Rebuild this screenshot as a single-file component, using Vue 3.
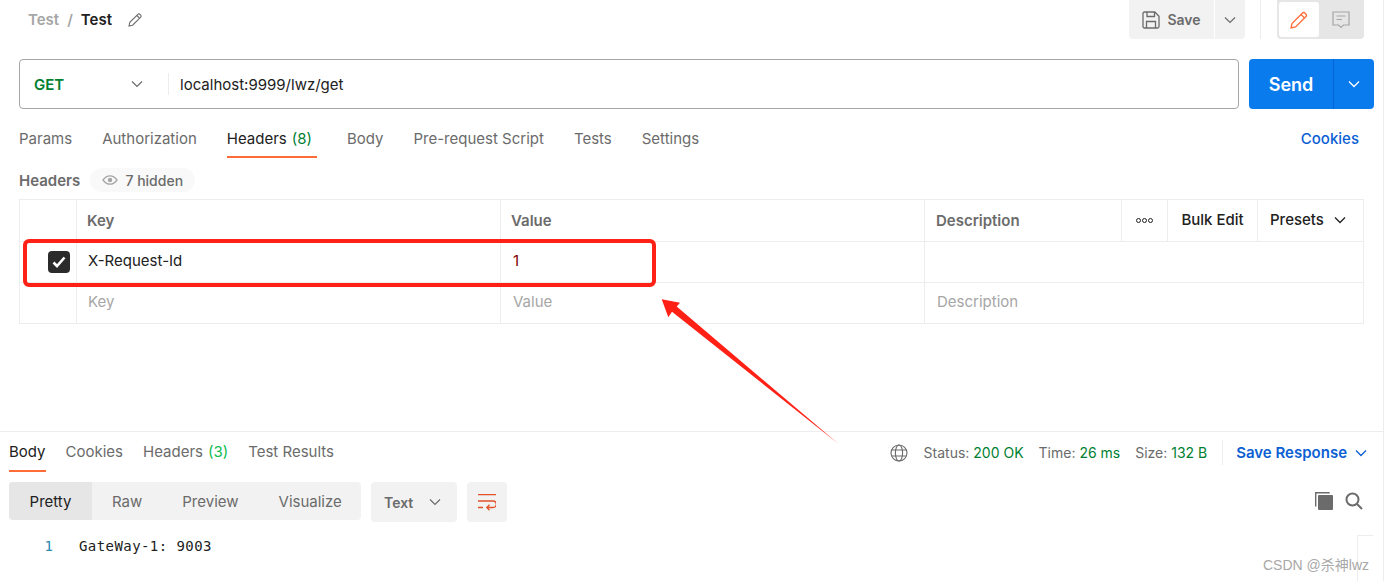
<script setup>
const reqTabs = [
  { label: 'Params' },
  { label: 'Authorization' },
  { label: 'Headers', count: '(8)', active: true },
  { label: 'Body' },
  { label: 'Pre-request Script' },
  { label: 'Tests' },
  { label: 'Settings' }
]
const resTabs = [
  { label: 'Body', active: true },
  { label: 'Cookies' },
  { label: 'Headers', count: '(3)' },
  { label: 'Test Results' }
]
const modes = ['Pretty', 'Raw', 'Preview', 'Visualize']
</script>

<template>
  <div class="page">
    <section class="request">
      <header class="topbar">
        <div class="crumbs">
          <span class="crumb-parent">Test</span>
          <span class="crumb-sep">/</span>
          <span class="crumb-cur">Test</span>
          <svg class="edit" width="16" height="16" viewBox="0 0 16 16" fill="none" stroke="#6b6b6b" stroke-width="1.100"><path d="M2 14l.8-3.600L10.900 2.300a1.400 1.400 0 0 1 2 0l.8.800a1.400 1.400 0 0 1 0 2L5.600 13.200z"/><path d="M9.800 3.500l2.700 2.700"/></svg>
        </div>
        <div class="top-actions">
          <div class="save">
            <svg width="18" height="18" viewBox="0 0 18 18" fill="none" stroke="#6b6b6b" stroke-width="1.300"><path d="M1 2.500A1.500 1.500 0 0 1 2.500 1h10.300L17 5.200v10.300a1.500 1.500 0 0 1-1.500 1.500h-13A1.500 1.500 0 0 1 1 15.500z"/><path d="M5 1v4.500h7.500V1"/><path d="M4.500 17v-6.500h9V17"/></svg>
            <span>Save</span>
          </div>
          <div class="save-caret">
            <svg width="12" height="8" viewBox="0 0 12 8" fill="none" stroke="#6b6b6b" stroke-width="1.200"><path d="M1 1.500l5 5 5-5"/></svg>
          </div>
          <div class="vline"></div>
          <div class="toggle">
            <div class="toggle-on">
              <svg width="18" height="18" viewBox="0 0 18 18" fill="none" stroke="#ff6c37" stroke-width="1.300"><path d="M1 17l1-4.500L12.500 2a1.600 1.600 0 0 1 2.300 0l1.200 1.200a1.600 1.600 0 0 1 0 2.300L5.500 16z"/><path d="M11 3.500l3.500 3.500"/></svg>
            </div>
            <div class="toggle-off">
              <svg width="18" height="18" viewBox="0 0 18 18" fill="none" stroke="#a6a6a6" stroke-width="1.200"><path d="M1 1h16v13h-5.500L9 16.500 6.500 14H1z"/><path d="M4.500 5h9M4.500 8.500h5.500"/></svg>
            </div>
          </div>
        </div>
      </header>

      <div class="urlrow">
        <div class="urlbox">
          <div class="method">
            <span>GET</span>
            <svg width="12" height="8" viewBox="0 0 12 8" fill="none" stroke="#6b6b6b" stroke-width="1.200"><path d="M1 1.500l5 5 5-5"/></svg>
          </div>
          <div class="url-sep"></div>
          <div class="url">localhost:9999/lwz/get</div>
        </div>
        <div class="send">
          <div class="send-main">Send</div>
          <div class="send-caret">
            <svg width="12" height="8" viewBox="0 0 12 8" fill="none" stroke="#fff" stroke-width="1.300"><path d="M1 1.500l5 5 5-5"/></svg>
          </div>
        </div>
      </div>

      <nav class="tabs">
        <div v-for="t in reqTabs" :key="t.label" class="tab" :class="{ active: t.active, counted: t.count }">
          {{ t.label }}<span v-if="t.count" class="count">{{ t.count }}</span>
        </div>
        <div class="cookies">Cookies</div>
      </nav>

      <div class="hdr-title">
        <span class="hdr-label">Headers</span>
        <span class="pill">
          <svg width="16" height="10" viewBox="0 0 16 10" fill="none" stroke="#a6a6a6" stroke-width="1.300"><path d="M1 5c2-2.800 4.400-4.200 7-4.200S13 2.200 15 5c-2 2.800-4.400 4.200-7 4.200S3 7.800 1 5z"/><circle cx="8" cy="5" r="1.600" fill="#a6a6a6"/></svg>
          7 hidden
        </span>
      </div>

      <div class="table">
        <div class="row head">
          <div class="c c-check"></div>
          <div class="c c-key">Key</div>
          <div class="c c-val">Value</div>
          <div class="c c-desc">Description</div>
          <div class="c c-more"><i></i><i></i><i></i></div>
          <div class="c c-bulk">Bulk Edit</div>
          <div class="c c-presets">Presets
            <svg width="12" height="8" viewBox="0 0 12 8" fill="none" stroke="#212121" stroke-width="1.300"><path d="M1 1.500l5 5 5-5"/></svg>
          </div>
        </div>
        <div class="row">
          <div class="c c-check">
            <span class="checkbox">
              <svg width="14" height="12" viewBox="0 0 14 12" fill="none" stroke="#fff" stroke-width="2.600"><path d="M1.500 6.500l3.500 3.500 7.500-8.500"/></svg>
            </span>
          </div>
          <div class="c c-key text">X-Request-Id</div>
          <div class="c c-val text val">1</div>
          <div class="c c-rest"></div>
        </div>
        <div class="row">
          <div class="c c-check"></div>
          <div class="c c-key ph">Key</div>
          <div class="c c-val ph">Value</div>
          <div class="c c-rest ph">Description</div>
        </div>
      </div>
    </section>

    <section class="response">
      <div class="res-head">
        <nav class="res-tabs">
          <div v-for="t in resTabs" :key="t.label" class="rtab" :class="{ active: t.active }">
            {{ t.label }}<span v-if="t.count" class="rcount">{{ t.count }}</span>
          </div>
        </nav>
        <div class="res-meta">
          <svg class="globe" width="18" height="18" viewBox="0 0 18 18" fill="none" stroke="#6b6b6b" stroke-width="1.100"><circle cx="9" cy="9" r="8"/><ellipse cx="9" cy="9" rx="3.600" ry="8"/><path d="M1.500 6h15M1.500 12h15"/></svg>
          <span class="m">Status: <b>200 OK</b></span>
          <span class="m">Time: <b>26 ms</b></span>
          <span class="m">Size: <b>132 B</b></span>
          <span class="meta-sep"></span>
          <span class="save-res">Save Response</span>
          <svg width="12" height="8" viewBox="0 0 12 8" fill="none" stroke="#0b5fd3" stroke-width="1.300"><path d="M1 1.500l5 5 5-5"/></svg>
        </div>
      </div>

      <div class="toolbar">
        <div class="modes">
          <div v-for="(m, i) in modes" :key="m" class="mode" :class="{ on: i === 0 }">{{ m }}</div>
        </div>
        <div class="fmt">
          <span>Text</span>
          <svg width="12" height="8" viewBox="0 0 12 8" fill="none" stroke="#6b6b6b" stroke-width="1.200"><path d="M1 1.500l5 5 5-5"/></svg>
        </div>
        <div class="wrap">
          <svg width="18" height="17" viewBox="0 0 18 17" fill="none" stroke="#e0522a" stroke-width="1.300"><path d="M0 .7h18M0 7h15a2.800 2.800 0 0 1 0 6.500H9M11.500 10.800L8.800 13.500l2.700 2.700M0 13.500h5"/></svg>
        </div>
        <div class="tools">
          <svg width="18" height="18" viewBox="0 0 18 18"><path d="M.7 14.500V.7h14" fill="none" stroke="#6b6b6b" stroke-width="1.400"/><rect x="3" y="3" width="15" height="15" rx="1" fill="#6b6b6b"/></svg>
          <svg width="18" height="18" viewBox="0 0 18 18" fill="none" stroke="#6b6b6b" stroke-width="2"><circle cx="7.500" cy="7.500" r="6"/><path d="M12 12l5 5"/></svg>
        </div>
      </div>

      <div class="code">
        <span class="ln">1</span>
        <span class="src">GateWay-1: 9003</span>
      </div>
    </section>

    <div class="scroll-mark"></div>
    <div class="watermark">CSDN @杀神lwz</div>
    <div class="highlight"></div>
    <svg class="arrow" width="1384" height="581" viewBox="0 0 1384 581"><polygon points="661.7,299.3 680,302.700 676.700,306.500 838,443.500 672,311.700 668.300,317.300" fill="#ff2116"/></svg>
  </div>
</template>

<style>
html, body { margin: 0; background: #fff; }
</style>

<style scoped>
.page {
  position: relative;
  width: 1384px;
  height: 581px;
  overflow: hidden;
  box-sizing: border-box;
  border-right: 1px solid #ededed;
  font-family: Inter, "Noto Sans CJK SC", sans-serif;
  font-size: 15px;
  color: #212121;
  display: flex;
  flex-direction: column;
}
.request { height: 431px; flex: none; }
.topbar { height: 39px; display: flex; justify-content: space-between; padding: 0 19px 0 28px; }
.crumbs { display: flex; align-items: center; font-weight: 600; }
.crumb-parent, .crumb-sep { color: #a6a6a6; }
.crumb-sep { margin: 0 8px; }
.edit { margin-left: 15px; }
.top-actions { display: flex; }
.save { width: 85px; background: #f2f2f2; border-radius: 0 0 0 4px; display: flex; align-items: center; justify-content: center; gap: 7px; color: #6b6b6b; font-weight: 600; font-size: 14px; }
.save-caret { width: 30px; margin-left: 1px; background: #f2f2f2; border-radius: 0 0 4px 0; display: flex; align-items: center; justify-content: center; }
.vline { width: 1px; background: #ededed; margin: 0 16px 0 15px; }
.toggle { width: 87px; background: #e6e6e6; border-radius: 0 0 4px 4px; padding: 2px; box-sizing: border-box; display: flex; }
.toggle-on { width: 40px; height: 35px; background: #fff; border-radius: 3px; display: flex; align-items: center; justify-content: center; }
.toggle-off { flex: 1; display: flex; align-items: center; justify-content: center; }

.urlrow { margin-top: 20px; padding: 0 9px 0 19px; display: flex; gap: 10px; height: 50px; }
.urlbox { flex: 1; border: 1px solid #a6a6a6; border-radius: 4px; display: flex; align-items: center; box-sizing: border-box; }
.method { width: 148px; box-sizing: border-box; padding: 0 25px 0 14px; display: flex; align-items: center; justify-content: space-between; font-weight: 600; color: #007f31; }
.url-sep { width: 1px; height: 22px; background: #ededed; }
.url { padding-left: 11px; }
.send { width: 125px; background: #097bed; border-radius: 4px; display: flex; color: #fff; }
.send-main { width: 84px; display: flex; align-items: center; justify-content: center; font-size: 18px; font-weight: 600; border-right: 1px solid #0265d2; }
.send-caret { flex: 1; display: flex; align-items: center; justify-content: center; }

.tabs { margin-top: 15px; padding: 0 24px 0 19px; display: flex; gap: 30px; height: 34px; }
.tab { color: #6b6b6b; height: 34px; line-height: 30px; box-sizing: border-box; border-bottom: 2px solid transparent; white-space: nowrap; }
.tab.counted { padding-right: 5px; }
.tab.active { color: #212121; border-bottom-color: #ff6c37; }
.count { color: #007f31; margin-left: 5px; }
.cookies { margin-left: auto; color: #0b5fd3; font-weight: 500; line-height: 30px; }

.hdr-title { margin-top: 10px; padding-left: 19px; height: 24px; display: flex; align-items: center; gap: 10px; }
.hdr-label { color: #6b6b6b; font-weight: 600; }
.pill { height: 24px; width: 105px; box-sizing: border-box; border-radius: 12px; background: #f9f9f9; display: flex; align-items: center; justify-content: center; gap: 7px; font-size: 14px; font-weight: 500; color: #6b6b6b; }

.table { margin: 7px 19px 0; width: 1345px; box-sizing: border-box; border: 1px solid #ededed; border-bottom: 0; }
.row { display: flex; height: 41px; box-sizing: border-box; border-bottom: 1px solid #ededed; }
.row.head { height: 42px; }
.c { box-sizing: border-box; display: flex; align-items: center; border-right: 1px solid #ededed; padding: 0 0 3px 12px; flex: none; }
.head .c { padding-bottom: 0; }
.c-check { width: 57px; padding: 0 6px 1px 0; justify-content: flex-end; }
.c-key, .c-val { width: 424px; }
.c-key { padding-left: 11px; }
.c-desc { width: 197px; }
.c-more { width: 46px; justify-content: center; gap: 1px; }
.head .c-more { padding: 0 0 1px; }
.c-more i { width: 5px; height: 5px; border: 1px solid #212121; border-radius: 50%; box-sizing: border-box; }
.c-bulk { width: 90px; justify-content: center; font-weight: 500; }
.head .c-bulk { padding: 0 0 2px; }
.c-presets { flex: 1; border-right: 0; gap: 10px; font-weight: 500; }
.head .c-presets { padding-bottom: 2px; }
.c-rest { flex: 1; border-right: 0; }
.head .c-key, .head .c-val, .head .c-desc { color: #6b6b6b; font-weight: 600; padding-left: 10px; }
.head .c-desc { padding-left: 11px; }
.text { color: #212121; }
.val { color: #800000; }
.ph { color: #a6a6a6; }
.checkbox { width: 22px; height: 22px; border-radius: 4px; background: #2b2b2b; display: flex; align-items: center; justify-content: center; }

.response { flex: 1; border-top: 1px solid #ededed; position: relative; }
.res-head { display: flex; justify-content: space-between; height: 41px; padding: 0 16px 0 9px; }
.res-tabs { display: flex; gap: 20px; }
.rtab { color: #6b6b6b; height: 40px; line-height: 39px; box-sizing: border-box; border-bottom: 2px solid transparent; white-space: nowrap; }
.rtab.active { color: #212121; border-bottom-color: #ff6c37; }
.rcount { color: #0cbb52; margin-left: 5px; }
.res-meta { display: flex; align-items: center; height: 41px; }
.globe { margin-right: 16px; }
.m { color: #6b6b6b; font-size: 14px; margin-right: 15px; }
.m b { font-weight: 400; color: #007f31; }
.meta-sep { width: 1px; height: 25px; background: #ededed; margin-right: 13px; }
.save-res { color: #0b5fd3; font-weight: 600; margin-right: 8px; }

.toolbar { margin-top: 9px; padding: 0 20px 0 9px; display: flex; align-items: flex-start; }
.modes { display: flex; width: 352px; height: 38px; background: #f2f2f2; border-radius: 4px; overflow: hidden; color: #6b6b6b; }
.mode { display: flex; align-items: center; padding: 0 20px; flex: none; }
.mode.on { width: 83px; padding: 0; justify-content: center; background: #e6e6e6; color: #212121; }
.fmt { margin-left: 10px; width: 86px; height: 40px; box-sizing: border-box; padding: 0 16px 0 13px; border-radius: 4px; background: #f2f2f2; display: flex; align-items: center; justify-content: space-between; color: #6b6b6b; font-weight: 600; font-size: 14px; }
.wrap { margin-left: 10px; width: 40px; height: 40px; border-radius: 4px; background: #f2f2f2; display: flex; align-items: center; justify-content: center; }
.tools { margin-left: auto; height: 38px; display: flex; align-items: center; gap: 12px; }

.code { margin-top: 14px; display: flex; height: 20px; align-items: center; font-family: "DejaVu Sans Mono", monospace; font-size: 14px; }
.ln { width: 53px; text-align: right; color: #2a8ab0; }
.src { margin-left: 26px; letter-spacing: 0.43px; }

.scroll-mark { position: absolute; left: 1357px; top: 535px; width: 16px; height: 46px; box-sizing: border-box; border-left: 1px solid #ededed; border-top: 1px solid #ededed; }
.watermark { position: absolute; left: 1263px; top: 554px; color: #a8a8a8; font-size: 14px; font-family: "Liberation Sans", "Noto Sans CJK SC", sans-serif; white-space: nowrap; }
.highlight { position: absolute; left: 23px; top: 239px; width: 633px; height: 48px; box-sizing: border-box; border: 4px solid #ff2116; border-radius: 6px; pointer-events: none; }
.arrow { position: absolute; left: 0; top: 0; pointer-events: none; }
</style>
